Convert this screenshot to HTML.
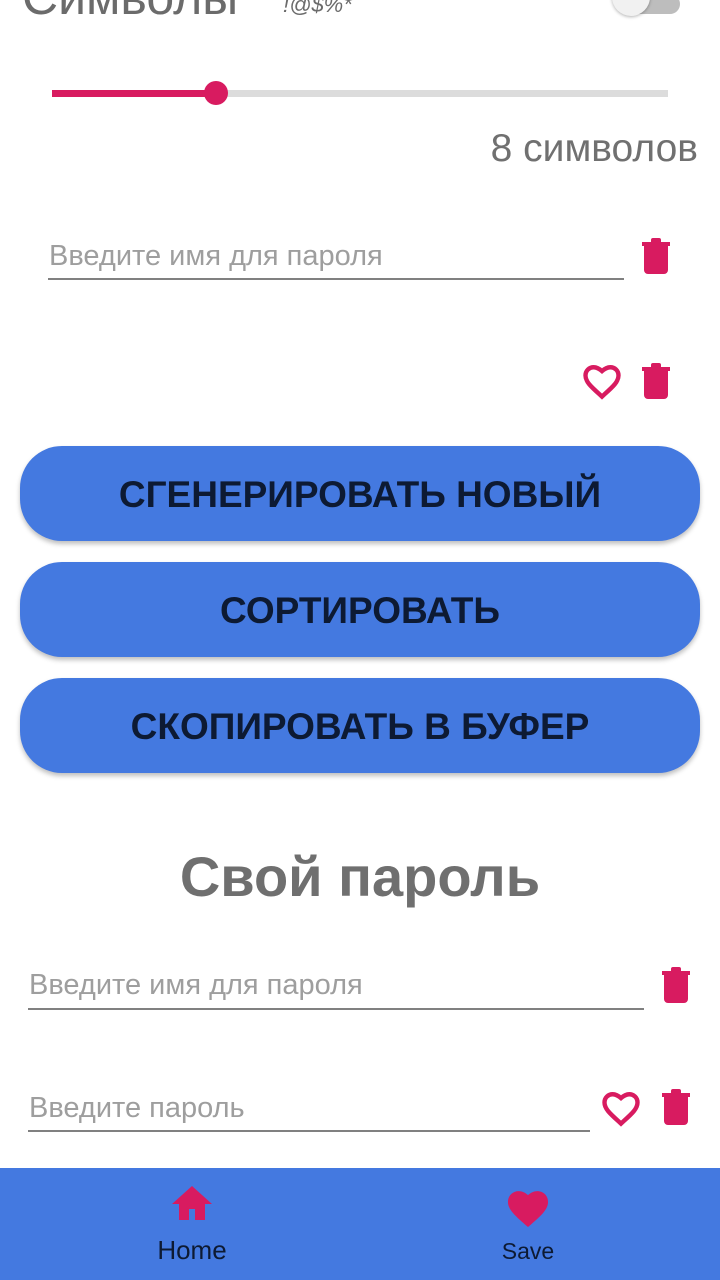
<!DOCTYPE html>
<html><head><meta charset="utf-8"><style>
*{margin:0;padding:0;box-sizing:border-box}
body{width:720px;height:1280px;position:relative;overflow:hidden;background:#fff;font-family:"Liberation Sans","Noto Sans CJK SC",sans-serif}
.a{position:absolute}
.btn{position:absolute;left:20px;width:680px;height:95px;border-radius:42px;background:#4479e0;box-shadow:0 3px 5px rgba(0,0,0,.25);color:#0d1a33;font-size:37px;font-weight:bold;text-align:center;line-height:97px}
.ph{position:absolute;color:#9e9e9e;font-size:29px}
.ul{position:absolute;height:2px;background:#808080}
</style></head><body>
<div class="a" style="left:22px;top:-32px;font-size:50px;color:#6b6b6b">Символы</div>
<div class="a" style="left:283px;top:-8px;font-size:22px;font-style:italic;color:#6b6b6b">!@$%*</div>
<div class="a" style="left:628px;top:-6px;width:52px;height:20px;border-radius:10px;background:#bdbdbd"></div>
<div class="a" style="left:612px;top:-22px;width:38px;height:38px;border-radius:50%;background:#f1f1f1;box-shadow:0 1px 3px rgba(0,0,0,.3)"></div>
<div class="a" style="left:52px;top:90px;width:616px;height:7px;background:#dcdcdc"></div>
<div class="a" style="left:52px;top:90px;width:164px;height:7px;background:#d81b60"></div>
<div class="a" style="left:204px;top:81px;width:24px;height:24px;border-radius:50%;background:#d81b60"></div>
<div class="a" style="right:22px;top:127px;font-size:39px;color:#707070">8 символов</div>

<div class="ph" style="left:49px;top:240px">Введите имя для пароля</div>
<div class="ul" style="left:48px;top:278px;width:576px"></div>
<svg class="a" style="left:640px;top:236px" width="32" height="40" viewBox="0 0 32 40"><rect x="2" y="6" width="28" height="4" fill="#d81b60"/><rect x="11" y="2" width="10" height="6" rx="2" fill="#d81b60"/><path d="M4 10h24v24a4 4 0 0 1-4 4H8a4 4 0 0 1-4-4z" fill="#d81b60"/></svg>

<svg class="a" style="left:580px;top:359px" width="44" height="44" viewBox="0 0 24 24"><path d="M12 20.5l-1.3-1.2C5.8 14.9 3 12.3 3 9c0-2.6 2-4.5 4.5-4.5 1.5 0 2.9.7 4.5 2.1 1.6-1.4 3-2.1 4.5-2.1C19 4.5 21 6.4 21 9c0 3.3-2.8 5.9-7.7 10.3z" fill="none" stroke="#d81b60" stroke-width="2.4"/></svg>
<svg class="a" style="left:640px;top:361px" width="32" height="40" viewBox="0 0 32 40"><rect x="2" y="6" width="28" height="4" fill="#d81b60"/><rect x="11" y="2" width="10" height="6" rx="2" fill="#d81b60"/><path d="M4 10h24v24a4 4 0 0 1-4 4H8a4 4 0 0 1-4-4z" fill="#d81b60"/></svg>

<div class="btn" style="top:446px">СГЕНЕРИРОВАТЬ НОВЫЙ</div>
<div class="btn" style="top:562px">СОРТИРОВАТЬ</div>
<div class="btn" style="top:678px">СКОПИРОВАТЬ В БУФЕР</div>

<div class="a" style="left:0;width:720px;top:844px;text-align:center;font-size:56px;font-weight:bold;color:#6f6f6f">Свой пароль</div>

<div class="ph" style="left:29px;top:969px">Введите имя для пароля</div>
<div class="ul" style="left:28px;top:1008px;width:616px"></div>
<svg class="a" style="left:660px;top:965px" width="32" height="40" viewBox="0 0 32 40"><rect x="2" y="6" width="28" height="4" fill="#d81b60"/><rect x="11" y="2" width="10" height="6" rx="2" fill="#d81b60"/><path d="M4 10h24v24a4 4 0 0 1-4 4H8a4 4 0 0 1-4-4z" fill="#d81b60"/></svg>

<div class="ph" style="left:29px;top:1092px">Введите пароль</div>
<div class="ul" style="left:28px;top:1130px;width:562px"></div>
<svg class="a" style="left:599px;top:1086px" width="44" height="44" viewBox="0 0 24 24"><path d="M12 20.5l-1.3-1.2C5.8 14.9 3 12.3 3 9c0-2.6 2-4.5 4.5-4.5 1.5 0 2.9.7 4.5 2.1 1.6-1.4 3-2.1 4.5-2.1C19 4.5 21 6.4 21 9c0 3.3-2.8 5.9-7.7 10.3z" fill="none" stroke="#d81b60" stroke-width="2.4"/></svg>
<svg class="a" style="left:660px;top:1087px" width="32" height="40" viewBox="0 0 32 40"><rect x="2" y="6" width="28" height="4" fill="#d81b60"/><rect x="11" y="2" width="10" height="6" rx="2" fill="#d81b60"/><path d="M4 10h24v24a4 4 0 0 1-4 4H8a4 4 0 0 1-4-4z" fill="#d81b60"/></svg>

<div class="a" style="left:0;top:1168px;width:720px;height:112px;background:#4479e0"></div>
<svg class="a" style="left:171px;top:1185px" width="42" height="36" viewBox="0 0 42 36"><path d="M21 1L1 19h7v16h10V24h6v11h10V19h7z" fill="#d81b60"/></svg>
<div class="a" style="left:132px;width:120px;top:1235px;text-align:center;font-size:26px;color:#0d1a33">Home</div>
<svg class="a" style="left:505px;top:1186px" width="46" height="42" viewBox="0 0 24 22"><path d="M12 21.5l-1.5-1.3C5 15.4 1.5 12.2 1.5 8.3 1.5 5.1 4 2.7 7.1 2.7c1.8 0 3.5.8 4.9 2.1 1.4-1.3 3.1-2.1 4.9-2.1 3.1 0 5.6 2.4 5.6 5.6 0 3.9-3.5 7.1-9 11.9z" fill="#d81b60"/></svg>
<div class="a" style="left:468px;width:120px;top:1238px;text-align:center;font-size:23px;color:#0d1a33">Save</div>
</body></html>
